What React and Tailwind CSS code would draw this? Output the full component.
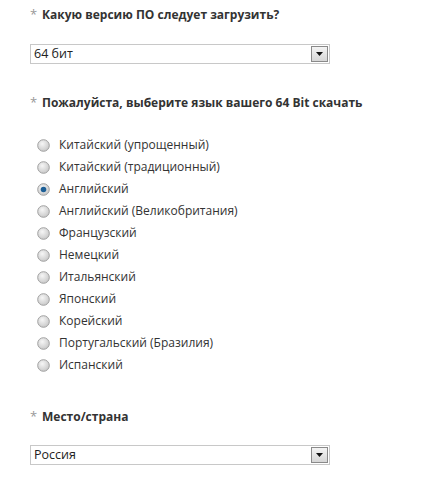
import React, { useState } from 'react';

const languages = [
  'Китайский (упрощенный)',
  'Китайский (традиционный)',
  'Английский',
  'Английский (Великобритания)',
  'Французский',
  'Немецкий',
  'Итальянский',
  'Японский',
  'Корейский',
  'Португальский (Бразилия)',
  'Испанский',
];

const Label = ({ children }) => (
  <div className="flex items-baseline h-5 leading-5">
    <span className="text-[#999] text-[13px] w-3 font-normal">*</span>
    <span className="text-[#333] text-[12px] font-bold">{children}</span>
  </div>
);

const Select = ({ value }) => (
  <div className="flex items-center justify-between w-[300px] h-5 border border-[#c8c8c8] bg-white">
    <span className="pl-[3px] text-[12.5px] text-[#222] leading-5">{value}</span>
    <span className="mr-px flex h-4 w-[17px] items-center justify-center border border-[#8a8a8a] bg-gradient-to-b from-[#f4f4f4] to-[#d6d6d6]">
      <svg width="7" height="4" viewBox="0 0 7 4">
        <path d="M0 0h7L3.5 4z" fill="#111" />
      </svg>
    </span>
  </div>
);

const Radio = ({ checked }) => (
  <svg width="13" height="13" viewBox="0 0 13 13">
    <defs>
      <radialGradient id={checked ? 'rc' : 'ru'} cx="0.4" cy="0.35" r="0.7">
        <stop offset="0" stopColor="#f6f6f6" />
        <stop offset="1" stopColor="#c6c6c6" />
      </radialGradient>
    </defs>
    <circle cx="6.5" cy="6.5" r="5.8" fill={`url(#${checked ? 'rc' : 'ru'})`} stroke="#a0a0a0" strokeWidth="1" />
    {checked && <circle cx="6.5" cy="6.5" r="2.8" fill="#1d5f96" />}
  </svg>
);

export default function App() {
  const [lang, setLang] = useState('Английский');

  return (
    <div className="w-[435px] h-[489px] bg-white pl-[30px] pt-[4px]" style={{ fontFamily: '"Open Sans", "Noto Sans", sans-serif' }}>
      <Label>Какую версию ПО следует загрузить?</Label>
      <div className="mt-5">
        <Select value="64 бит" />
      </div>

      <div className="mt-[28px]">
        <Label>Пожалуйста, выберите язык вашего 64 Bit скачать</Label>
      </div>

      <div className="mt-[22px] pl-[7px] flex flex-col">
        {languages.map((l) => (
          <label key={l} className="flex items-center h-[22px] gap-[9px] cursor-pointer" onClick={() => setLang(l)}>
            <Radio checked={lang === l} />
            <span className="text-[12px] text-[#333]">{l}</span>
          </label>
        ))}
      </div>

      <div className="mt-[30px]">
        <Label>Место/страна</Label>
      </div>
      <div className="mt-[19px]">
        <Select value="Россия" />
      </div>
    </div>
  );
}
